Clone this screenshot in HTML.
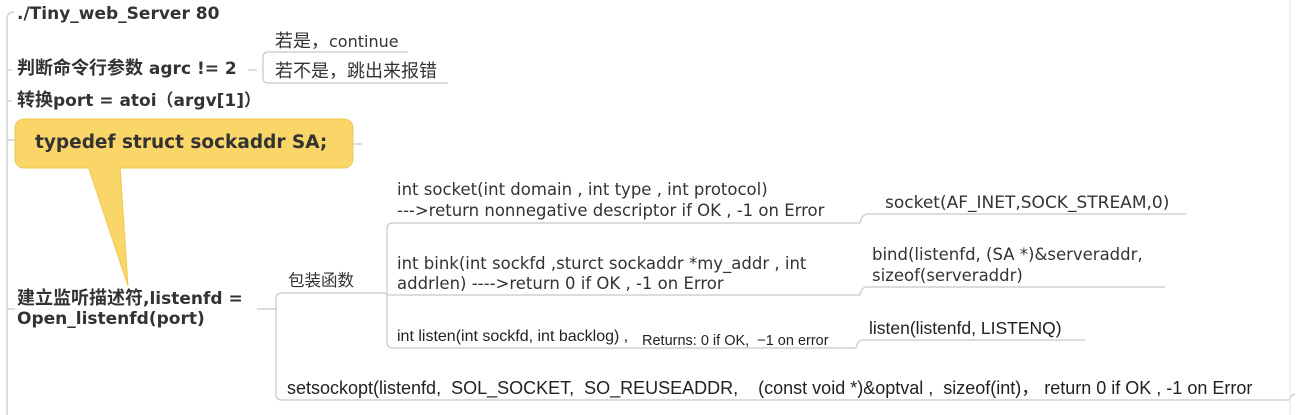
<!DOCTYPE html>
<html><head><meta charset="utf-8"><style>
html,body{margin:0;padding:0;background:#fff;width:1301px;height:415px;overflow:hidden;position:relative}
.t{position:absolute;white-space:nowrap;color:#333;line-height:20px}
.b{font-family:"DejaVu Sans","Noto Sans CJK SC",sans-serif;font-weight:bold;font-size:17px}
.n{font-family:"DejaVu Sans","Noto Sans CJK SC",sans-serif;font-size:16.5px}
.a{font-family:"Liberation Sans","Noto Sans CJK SC",sans-serif;font-size:18px;color:#222}
.c{font-size:18px}
svg{position:absolute;left:0;top:0}
</style></head><body>
<svg width="1301" height="415" fill="none" stroke="#c8c8c8" stroke-width="1.2">
<path d="M14 12 Q7 12 7 20 V415"/>
<path d="M7 140 H15 M7 309 H15 M7 70 H12 M7 101 H12"/>
<path d="M248 70 H257"/>
<path d="M408 52 H268 Q263 52 263 58 V78 Q263 83 268 83 H448"/>
<path d="M257 309 H276"/>
<path d="M385 293 H282 Q276 293 276 299 V394 Q276 400 282 400 H1289"/>
<path d="M1289 400 Q1291 395 1295 394"/>
<path d="M860 223 H393 Q387 223 387 229 V342 Q387 348 393 348 H856"/>
<path d="M860 223 Q862 214 868 214 H1186"/>
<path d="M385 293 Q387 295 390 295 H860 Q862 287 866 287 H1165"/>
<path d="M856 348 Q858 340 862 340 H1085"/>
<path d="M353 144 H362"/>
<path d="M1290 0 V415" stroke="#e6e6e6"/>
</svg>
<svg width="1301" height="415">
<path d="M88 166 L128 286 L120 166 Z" fill="#fad669" stroke="#f0c850" stroke-width="1"/>
<rect x="15" y="119" width="338" height="49" rx="9" fill="#fad669" stroke="#f0c850"/>
<path d="M89 167 L120 167" stroke="#fad669" stroke-width="3"/>
</svg>
<div class="t b" style="left:17px;top:4px">./Tiny_web_Server 80</div>
<div class="t n" style="left:275px;top:32px;font-size:16px"><span class="c">若是，</span>continue</div>
<div class="t b" style="left:17px;top:59px"><span class="c">判断命令行参数</span> agrc != 2</div>
<div class="t n" style="left:275px;top:62px;font-size:18px">若不是，跳出来报错</div>
<div class="t b" style="left:17px;top:91px"><span class="c">转换</span>port = atoi（argv[1]）</div>
<div class="t b" style="left:35px;top:133px;font-size:18.5px;color:#333">typedef struct sockaddr SA;</div>
<div class="t b" style="left:17px;top:289px"><span class="c">建立监听描述符</span>,listenfd =</div>
<div class="t b" style="left:17px;top:309px">Open_listenfd(port)</div>
<div class="t n" style="left:288px;top:271px">包装函数</div>
<div class="t n" style="left:397px;top:180px">int socket(int domain , int type , int protocol)</div>
<div class="t n" style="left:397px;top:201px">---&gt;return nonnegative descriptor if OK , -1 on Error</div>
<div class="t n" style="left:885px;top:193px;font-size:17px">socket(AF_INET,SOCK_STREAM,0)</div>
<div class="t n" style="left:397px;top:254px">int bink(int sockfd ,sturct sockaddr *my_addr , int</div>
<div class="t n" style="left:397px;top:274px">addrlen) ----&gt;return 0 if OK , -1 on Error</div>
<div class="t n" style="left:872px;top:245px">bind(listenfd, (SA *)&amp;serveraddr,</div>
<div class="t n" style="left:872px;top:266px">sizeof(serveraddr)</div>
<div class="t a" style="left:397px;top:327px;font-size:16px">int listen(int sockfd, int backlog) ,</div>
<div class="t a" style="left:642px;top:331px;font-size:14.5px">Returns: 0 if OK,&nbsp; −1 on error</div>
<div class="t a" style="left:869px;top:318px;font-size:17.5px">listen(listenfd, LISTENQ)</div>
<div class="t a" style="left:287px;top:378px">setsockopt(listenfd,&nbsp; SOL_SOCKET,&nbsp; SO_REUSEADDR,&nbsp;&nbsp;&nbsp; (const void *)&amp;optval ,&nbsp; sizeof(int)，&nbsp;return 0 if OK , -1 on Error</div>
</body></html>
